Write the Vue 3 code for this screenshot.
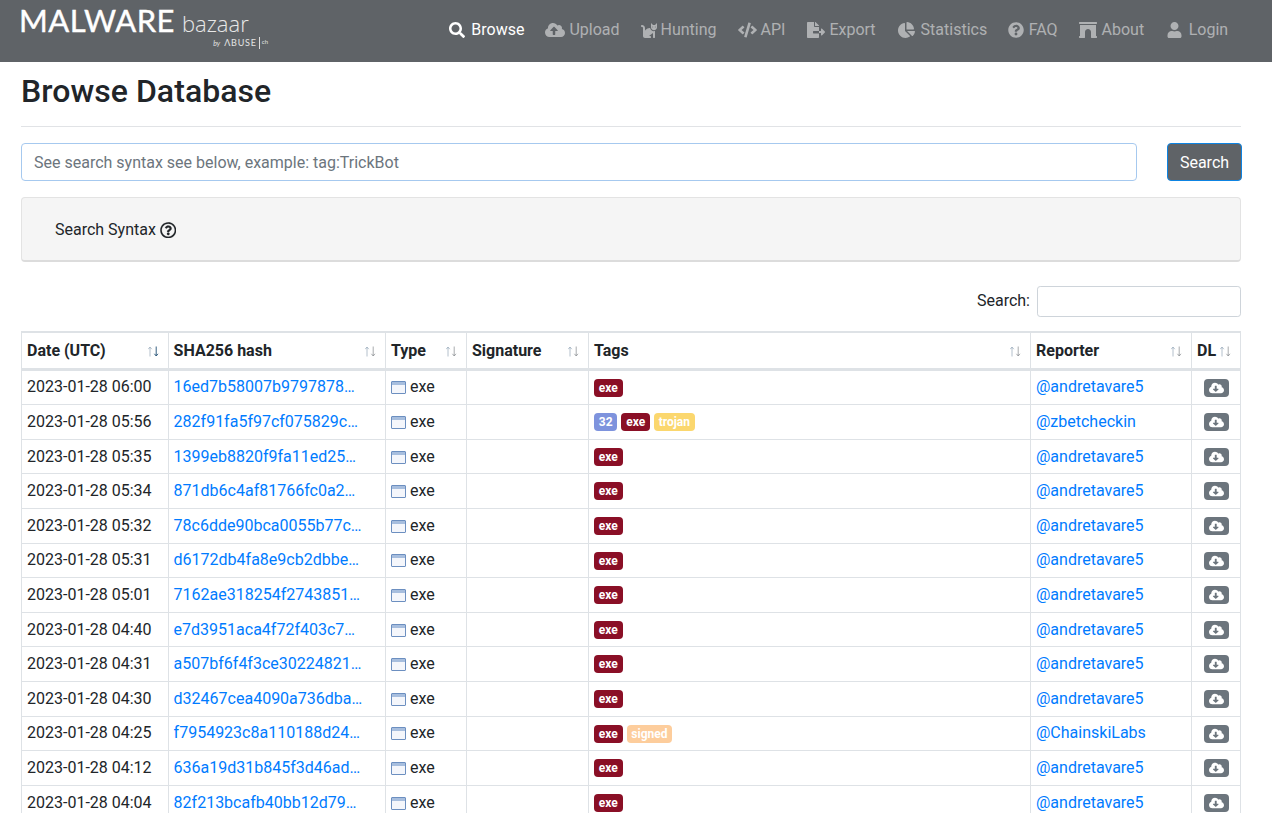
<script setup>
const icons = {
  search: { vb: '0 0 512 512', w: 16, d: 'M505 442.7L405.3 343c-4.5-4.5-10.6-7-17-7H372c27.6-35.3 44-79.7 44-128C416 93.1 322.9 0 208 0S0 93.1 0 208s93.1 208 208 208c48.3 0 92.7-16.4 128-44v16.3c0 6.4 2.5 12.5 7 17l99.7 99.7c9.4 9.4 24.6 9.4 33.9 0l28.3-28.3c9.4-9.4 9.4-24.6.1-34zM208 336c-70.7 0-128-57.2-128-128 0-70.7 57.2-128 128-128 70.7 0 128 57.2 128 128 0 70.7-57.2 128-128 128z' },
  upload: { vb: '0 0 640 512', w: 20, d: 'M537.6 226.6c4.1-10.7 6.4-22.4 6.4-34.6 0-53-43-96-96-96-19.7 0-38.1 6-53.3 16.2C367 64.2 315.3 32 256 32c-88.4 0-160 71.6-160 160 0 2.7.1 5.4.2 8.1C40.2 219.8 0 273.2 0 336c0 79.5 64.5 144 144 144h368c70.7 0 128-57.3 128-128 0-61.9-44-113.6-102.4-125.4zM393.4 288H328v112c0 8.8-7.2 16-16 16h-48c-8.8 0-16-7.2-16-16V288h-65.4c-14.3 0-21.4-17.2-11.3-27.3l105.4-105.4c6.2-6.2 16.4-6.2 22.6 0l105.4 105.4c10.1 10.1 2.9 27.3-11.3 27.3z' },
  cat: { vb: '0 0 512 512', w: 16, d: 'M290.59 192c-20.18 0-106.82 1.98-162.59 85.95V192c0-52.94-43.06-96-96-96-17.67 0-32 14.33-32 32s14.33 32 32 32c17.64 0 32 14.36 32 32v256c0 35.3 28.7 64 64 64h176c8.84 0 16-7.16 16-16v-16c0-17.67-14.33-32-32-32h-32l128-96v144c0 8.84 7.16 16 16 16h32c8.84 0 16-7.16 16-16V289.86c-10.29 2.67-20.89 4.54-32 4.54-61.81 0-113.52-44.05-125.41-102.4zM448 96h-64l-64-64v134.4c0 53.02 42.98 96 96 96s96-42.98 96-96V32l-64 64zm-72 80c-8.84 0-16-7.16-16-16s7.16-16 16-16 16 7.16 16 16-7.16 16-16 16zm80 0c-8.84 0-16-7.16-16-16s7.16-16 16-16 16 7.16 16 16-7.16 16-16 16z' },
  code: { vb: '0 0 640 512', w: 19, d: 'M278.9 511.5l-61-17.7c-6.4-1.8-10-8.5-8.2-14.9L346.2 8.7c1.8-6.4 8.5-10 14.9-8.2l61 17.7c6.4 1.8 10 8.5 8.2 14.9L293.8 503.3c-1.9 6.4-8.5 10.1-14.9 8.2zm-114-112.2l43.5-46.4c4.6-4.9 4.3-12.7-.8-17.2L117 256l90.6-79.7c5.1-4.5 5.5-12.3.8-17.2l-43.5-46.4c-4.5-4.8-12.1-5.1-17-.5L3.8 247.2c-5.1 4.7-5.1 12.8 0 17.5l144.1 135.1c4.9 4.6 12.5 4.4 17-.5zm327.2.6l144.1-135.1c5.1-4.7 5.1-12.8 0-17.5L492.1 112.1c-4.8-4.5-12.4-4.3-17 .5L431.6 159c-4.6 4.9-4.3 12.7.8 17.2L523 256l-90.6 79.7c-5.1 4.5-5.5 12.3-.8 17.2l43.5 46.4c4.5 4.9 12.1 5.1 17 .6z' },
  fileExport: { vb: '0 0 576 512', w: 18, d: 'M384 121.9c0-6.3-2.5-12.4-7-16.9L279.1 7c-4.5-4.5-10.6-7-17-7H256v128h128v-6.1zM192 336v-32c0-8.84 7.16-16 16-16h176V160H248c-13.2 0-24-10.8-24-24V0H24C10.7 0 0 10.7 0 24v464c0 13.3 10.7 24 24 24h336c13.3 0 24-10.7 24-24V368H208c-8.84 0-16-7.16-16-16zm379.05-28.02l-95.7-96.43c-10.06-10.14-27.36-3.01-27.36 11.27V288H384v64h63.99v65.18c0 14.28 17.29 21.41 27.36 11.27l95.7-96.43c6.6-6.65 6.6-17.39 0-24.04z' },
  pie: { vb: '0 0 544 512', w: 17, d: 'M527.79 288H290.5l158.03 158.03c6.04 6.04 15.98 6.53 22.19.68 38.7-36.46 65.32-85.61 73.13-140.86 1.34-9.46-6.51-17.85-16.06-17.85zm-15.83-64.8C503.72 103.74 408.26 8.28 288.8.04 279.68-.59 272 7.1 272 16.24V240h223.77c9.14 0 16.82-7.68 16.19-16.8zM224 288V50.71c0-9.55-8.39-17.4-17.84-16.06C86.99 51.49-4.1 155.6.14 280.37 4.5 408.51 114.83 513.59 243.03 511.98c50.4-.63 96.97-16.87 135.26-44.03 7.9-5.6 8.42-17.23 1.57-24.08L224 288z' },
  question: { vb: '0 0 512 512', w: 16, d: 'M504 256c0 136.997-111.043 248-248 248S8 392.997 8 256C8 119.083 119.043 8 256 8s248 111.083 248 248zM262.655 90c-54.497 0-89.255 22.957-116.549 63.758-3.536 5.286-2.353 12.415 2.715 16.258l34.699 26.31c5.205 3.947 12.621 3.008 16.665-2.122 17.864-22.658 30.113-35.797 57.303-35.797 20.429 0 45.698 13.148 45.698 32.958 0 14.976-12.363 22.667-32.534 33.976C247.128 238.528 216 254.941 216 296v4c0 6.627 5.373 12 12 12h56c6.627 0 12-5.373 12-12v-1.333c0-28.462 83.186-29.647 83.186-106.667 0-58.002-60.165-102-116.531-102zM256 338c-25.365 0-46 20.635-46 46 0 25.364 20.635 46 46 46s46-20.636 46-46c0-25.365-20.635-46-46-46z' },
  archway: { vb: '0 0 576 512', w: 18, d: 'M560 448h-16V96H32v352H16.02c-8.84 0-16 7.16-16 16v32c0 8.84 7.16 16 16 16H176c8.84 0 16-7.16 16-16V320c0-53.02 42.98-96 96-96s96 42.98 96 96l.02 160v16c0 8.84 7.16 16 16 16H560c8.84 0 16-7.16 16-16v-32c0-8.84-7.16-16-16-16zm0-448H16C7.16 0 0 7.16 0 16v32c0 8.84 7.16 16 16 16h544c8.84 0 16-7.16 16-16V16c0-8.84-7.16-16-16-16z' },
  user: { vb: '0 0 448 512', w: 15, d: 'M224 256c70.7 0 128-57.3 128-128S294.7 0 224 0 96 57.3 96 128s57.3 128 128 128zm89.6 32h-16.7c-22.2 10.2-46.9 16-72.9 16s-50.6-5.8-72.9-16h-16.7C60.2 288 0 348.2 0 422.4V464c0 26.5 21.5 48 48 48h352c26.5 0 48-21.5 48-48v-41.6c0-74.2-60.2-134.4-134.4-134.4z' }
}
const nav = [
  { label: 'Browse', icon: 'search', active: true },
  { label: 'Upload', icon: 'upload' },
  { label: 'Hunting', icon: 'cat' },
  { label: 'API', icon: 'code' },
  { label: 'Export', icon: 'fileExport' },
  { label: 'Statistics', icon: 'pie' },
  { label: 'FAQ', icon: 'question' },
  { label: 'About', icon: 'archway' },
  { label: 'Login', icon: 'user' }
]
const columns = [
  { label: 'Date (UTC)', sorted: true },
  { label: 'SHA256 hash' },
  { label: 'Type' },
  { label: 'Signature' },
  { label: 'Tags' },
  { label: 'Reporter' },
  { label: 'DL' }
]
const A = '@andretavare5'
const rows = [
  ['2023-01-28 06:00', '16ed7b58007b9797878…', ['exe'], A],
  ['2023-01-28 05:56', '282f91fa5f97cf075829c…', ['32', 'exe', 'trojan'], '@zbetcheckin'],
  ['2023-01-28 05:35', '1399eb8820f9fa11ed25…', ['exe'], A],
  ['2023-01-28 05:34', '871db6c4af81766fc0a2…', ['exe'], A],
  ['2023-01-28 05:32', '78c6dde90bca0055b77c…', ['exe'], A],
  ['2023-01-28 05:31', 'd6172db4fa8e9cb2dbbe…', ['exe'], A],
  ['2023-01-28 05:01', '7162ae318254f2743851…', ['exe'], A],
  ['2023-01-28 04:40', 'e7d3951aca4f72f403c7…', ['exe'], A],
  ['2023-01-28 04:31', 'a507bf6f4f3ce30224821…', ['exe'], A],
  ['2023-01-28 04:30', 'd32467cea4090a736dba…', ['exe'], A],
  ['2023-01-28 04:25', 'f7954923c8a110188d24…', ['exe', 'signed'], '@ChainskiLabs'],
  ['2023-01-28 04:12', '636a19d31b845f3d46ad…', ['exe'], A],
  ['2023-01-28 04:04', '82f213bcafb40bb12d79…', ['exe'], A]
]
const download = 'M537.6 226.6c4.1-10.7 6.4-22.4 6.4-34.6 0-53-43-96-96-96-19.7 0-38.1 6-53.3 16.2C367 64.2 315.3 32 256 32c-88.4 0-160 71.6-160 160 0 2.7.1 5.4.2 8.1C40.2 219.8 0 273.2 0 336c0 79.5 64.5 144 144 144h368c70.7 0 128-57.3 128-128 0-61.9-44-113.6-102.4-125.4zm-132.9 88.7L299.3 420.7c-6.2 6.2-16.4 6.2-22.6 0L171.3 315.3c-10.1-10.1-2.9-27.3 11.3-27.3H248V176c0-8.8 7.2-16 16-16h48c8.8 0 16 7.2 16 16v112h65.4c14.2 0 21.4 17.2 11.3 27.3z'
const circleQ = 'M256 8C119.043 8 8 119.083 8 256c0 136.997 111.043 248 248 248s248-111.003 248-248C504 119.083 392.957 8 256 8zm0 448c-110.532 0-200-89.431-200-200 0-110.495 89.472-200 200-200 110.491 0 200 89.471 200 200 0 110.53-89.431 200-200 200zm107.244-255.2c0 67.052-72.421 68.084-72.421 92.863V300c0 6.627-5.373 12-12 12h-45.647c-6.627 0-12-5.373-12-12v-8.659c0-35.745 27.1-50.034 47.579-61.516 17.561-9.845 28.324-16.541 28.324-29.579 0-17.246-21.999-28.693-39.784-28.693-23.189 0-33.894 10.977-48.942 29.969-4.057 5.12-11.46 6.071-16.666 2.124l-27.824-21.098c-5.107-3.872-6.251-11.066-2.644-16.363C184.846 131.491 214.94 112 261.794 112c49.071 0 101.45 38.304 101.45 88.8zM298 368c0 23.159-18.841 42-42 42s-42-18.841-42-42 18.841-42 42-42 42 18.841 42 42z'
</script>

<template>
  <div class="page">
    <header class="navbar">
      <a class="logo">
        <span class="logo-top"><span class="logo-main">MALWARE</span><span class="logo-sub">bazaar</span></span>
        <span class="logo-by"><i>by</i><b>ΛBUSE</b><em>ch</em></span>
      </a>
      <nav class="nav">
        <a v-for="n in nav" :key="n.label" class="nav-link" :class="['i-' + n.icon, { active: n.active }]">
          <svg class="nav-icon" :viewBox="icons[n.icon].vb" :width="icons[n.icon].w" height="16"><path :d="icons[n.icon].d" fill="currentColor" /></svg>
          <span>{{ n.label }}</span>
        </a>
      </nav>
    </header>
    <main class="content">
      <h1>Browse Database</h1>
      <hr />
      <div class="search-row">
        <input class="main-input" placeholder="See search syntax see below, example: tag:TrickBot" />
        <button class="search-btn">Search</button>
      </div>
      <div class="well">
        <span>Search Syntax</span>
        <svg viewBox="0 0 512 512" width="16.5" height="16.5"><path :d="circleQ" fill="currentColor" stroke="currentColor" stroke-width="4" /></svg>
      </div>
      <div class="filter"><label>Search:</label><input class="filter-input" /></div>
      <table class="grid">
        <colgroup>
          <col style="width:145.6px" /><col style="width:217.4px" /><col style="width:81px" /><col style="width:122px" /><col style="width:442px" /><col style="width:161px" /><col style="width:49px" />
        </colgroup>
        <thead>
          <tr>
            <th v-for="c in columns" :key="c.label">
              <div class="th-in">
                <span>{{ c.label }}</span>
                <svg class="sort" viewBox="0 0 11 11" width="11" height="11">
                  <path d="M2 10.5V1.2M.2 3.2L2 1l1.8 2.2" fill="none" stroke="#8fa3b5" stroke-width="0.9" opacity="0.75" />
                  <path d="M8.2 .5v9.3M6.4 7.8L8.2 10l1.8-2.2" fill="none" :stroke="c.sorted ? '#1f4e73' : '#7d8286'" stroke-width="0.9" :opacity="c.sorted ? 1 : 0.75" />
                </svg>
              </div>
            </th>
          </tr>
        </thead>
        <tbody>
          <tr v-for="r in rows" :key="r[1]">
            <td>{{ r[0] }}</td>
            <td><a class="link">{{ r[1] }}</a></td>
            <td>
              <svg class="win" viewBox="0 0 15 13" width="15" height="13">
                <rect x="0.5" y="0.5" width="14" height="12" rx="0.5" fill="#f4f6fb" stroke="#6c8fc0" />
                <rect x="1" y="1" width="13" height="3" fill="#a7bede" />
              </svg>
              exe
            </td>
            <td></td>
            <td>
              <div class="tags"><span v-for="t in r[2]" :key="t" class="badge" :class="'b-' + t">{{ t }}</span></div>
            </td>
            <td><a class="link">{{ r[3] }}</a></td>
            <td class="dl">
              <span class="dl-btn"><svg viewBox="0 0 640 512" width="15" height="12"><path :d="download" fill="#fff" /></svg></span>
            </td>
          </tr>
        </tbody>
      </table>
    </main>
  </div>
</template>

<style>
html, body { margin: 0; padding: 0; overflow: hidden; }
</style>

<style scoped>
.page {
  height: 813px;
  overflow: hidden;
  font-family: Roboto, "Liberation Sans", sans-serif;
  font-size: 16px;
  line-height: 1.5;
  color: #212529;
  background: #fff;
}
.navbar {
  height: 62px;
  background: #5f6367;
  display: flex;
  align-items: flex-start;
  justify-content: space-between;
  padding: 0 33.4px 0 19px;
  box-sizing: border-box;
}
.logo {
  display: flex;
  flex-direction: column;
  color: #fff;
  width: 249px;
  padding-top: 3px;
}
.logo-top { display: flex; align-items: baseline; height: 34px; line-height: 34px; }
.logo-main {
  font-family: Lato, sans-serif;
  font-size: 31px;
  font-weight: 400;
  letter-spacing: 0.45px;
  -webkit-text-stroke: 0.4px #fff;
}
.logo-sub { font-family: "Open Sans", sans-serif; font-weight: 300; font-size: 22px; margin-left: 7px; color: #e8e8e8; }
.logo-by {
  display: flex;
  align-items: center;
  justify-content: flex-end;
  font-family: Lato, sans-serif;
  line-height: 12px;
  height: 12px;
  color: #e4e4e4;
}
.logo-by i { font-size: 7px; margin-right: 4px; }
.logo-by b { font-size: 9px; font-weight: 400; letter-spacing: 0.8px; padding-right: 2px; border-right: 1px solid #ddd; }
.logo-by em { font-size: 6px; font-style: normal; margin-left: 2px; margin-bottom: 3px; }
.nav { display: flex; padding-top: 17.5px; }
.nav-link {
  display: flex;
  align-items: center;
  gap: 4px;
  padding: 0 10.5px;
  color: rgba(255, 255, 255, 0.5);
  height: 24px;
}
.nav-link.active { color: #fff; }
.i-search { gap: 6px; }
.i-fileExport { margin-left: 1px; }
.i-pie { gap: 6px; margin-left: 1px; }
.i-question { gap: 4.5px; }
.i-archway { gap: 5px; }
.i-user { gap: 6.5px; margin-left: 2px; }
.content { padding: 0 31px 0 21px; }
h1 {
  margin: 0;
  padding-top: 10px;
  font-size: 32px;
  font-weight: 500;
  line-height: 38.4px;
  letter-spacing: 0.05px;
}
hr { border: 0; border-top: 1px solid #e1e3e6; margin: 16px 0 16px; }
.search-row { display: flex; justify-content: space-between; }
.main-input {
  width: 1116px;
  height: 38px;
  box-sizing: border-box;
  border: 1px solid #a6c9ef;
  border-radius: 4px;
  padding: 6px 12px;
  font: 16px Roboto, sans-serif;
  outline: 0;
}
.main-input::placeholder { color: #6c757d; opacity: 1; }
.search-btn {
  width: 75px;
  height: 38px;
  box-sizing: border-box;
  margin-right: -1px;
  background: #5f6367;
  border: 1px solid #0d84e3;
  border-radius: 4px;
  color: #fff;
  font: 16px Roboto, sans-serif;
  padding: 0;
}
.well {
  margin-top: 16px;
  height: 65px;
  box-sizing: border-box;
  background: #f5f5f5;
  border: 1px solid #e3e3e3;
  border-bottom: 2px solid #dcdcdc;
  border-radius: 4px;
  padding: 1px 0 0 33px;
  display: flex;
  align-items: center;
  gap: 4px;
}
.filter {
  display: flex;
  justify-content: flex-end;
  align-items: center;
  gap: 7px;
  margin-top: 24px;
  height: 31px;
}
.filter label { margin-bottom: 2px; }
.filter-input {
  width: 204px;
  height: 31px;
  box-sizing: border-box;
  border: 1px solid #ced4da;
  border-radius: 3.2px;
  outline: 0;
}
.grid {
  margin-top: 13.9px;
  width: 1220px;
  table-layout: fixed;
  border-collapse: separate;
  border-spacing: 0;
  border: 1px solid #dee2e6;
  border-bottom: 0;
}
th, td {
  padding: 4.8px 5px;
  border-top: 1px solid #dee2e6;
  border-left: 1px solid #dee2e6;
  text-align: left;
  vertical-align: top;
  white-space: nowrap;
}
th:first-child, td:first-child { border-left: 0; }
th { font-weight: 700; border-bottom: 2px solid #dee2e6; padding: 5.6px 9px 4.8px 5px; }
.th-in { display: flex; justify-content: space-between; align-items: center; }
.sort { flex: none; margin-top: 2px; }
.link { color: #007bff; }
.win { vertical-align: -2px; }
.tags { display: flex; gap: 4px; padding-top: 3.2px; }
.badge {
  display: block;
  font-size: 12px;
  line-height: 12px;
  font-weight: 700;
  padding: 3px 4.8px;
  border-radius: 4px;
  color: #fff;
  background: #8a0f26;
}
.b-32 { background: #7e93dd; }
.b-trojan { background: #fbd76e; }
.b-signed { background: #fdcd9c; }
.dl { text-align: center; padding: 8px 4px 0 5px; }
.dl-btn {
  display: inline-flex;
  align-items: center;
  justify-content: center;
  width: 25px;
  height: 18px;
  border-radius: 4px;
  background: #6c757d;
  vertical-align: top;
}
</style>
